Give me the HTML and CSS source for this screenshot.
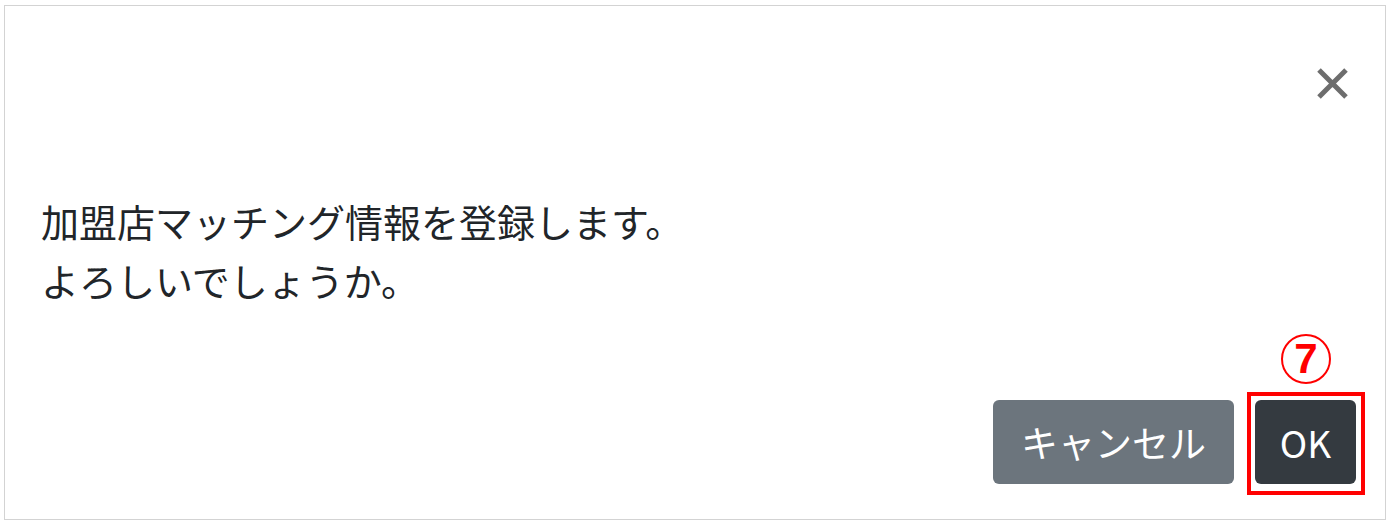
FILE: index.html
```html
<html>
    <head>
        <meta charset="utf-8">
        <link rel="stylesheet" href="styles.css">
    </head>

    <body>
        <div class="modal">
            <div class="modal-header">
                <a class="btn-close" title="閉じる">
                    <svg width="31" height="31" viewBox="0 0 31 31">
                        <path d="M2 2 L29 29 M29 2 L2 29" stroke="#6d6d6d" stroke-width="5" fill="none"/>
                    </svg>
                </a>
            </div>
            <div class="modal-body">
                <p>加盟店マッチング情報を登録します。<br/>よろしいでしょうか。</p>
            </div>
            <div class="modal-footer">
                <a class="btn btn-secondary">キャンセル</a>
                <span class="marker">
                    <span class="marker-num">7</span>
                    <a class="btn btn-dark">OK</a>
                </span>
            </div>
        </div>
    </body>
</html>
```

FILE: styles.css
```css
body {
    margin: 0;
    font-family: "Noto Sans CJK JP", "Noto Sans", sans-serif;
    color: #212529;
    background-color: #fff;
}

.modal {
    box-sizing: border-box;
    height: 515px;
    margin: 5px 6px 0 4px;
    border: 1px solid #d3d3d3;
    display: flex;
    flex-direction: column;
}

.modal-header {
    display: flex;
    justify-content: flex-end;
    padding: 62px 37px 0 0;
}

.btn-close {
    display: block;
    width: 31px;
    height: 31px;
    cursor: pointer;
}

.btn-close svg {
    display: block;
}

.modal-body {
    padding: 92px 0 0 36px;
}

.modal-body p {
    margin: 0;
    font-size: 38px;
    line-height: 59px;
}

.modal-footer {
    margin-top: auto;
    display: flex;
    justify-content: flex-end;
    align-items: flex-start;
    gap: 13px;
    padding: 0 20px 24px 0;
}

.btn {
    display: flex;
    align-items: center;
    justify-content: center;
    height: 84px;
    box-sizing: border-box;
    border-radius: 6px;
    font-size: 37px;
    color: #fff;
    cursor: pointer;
    white-space: nowrap;
}

.btn-secondary {
    margin-top: 8px;
    width: 241px;
    background-color: #6c757d;
}

.btn-dark {
    width: 101px;
    background-color: #343a40;
}

.marker {
    position: relative;
    display: block;
    border: 4px solid #ff0000;
    padding: 4px 5px 7px 4px;
}

.marker-num {
    position: absolute;
    bottom: calc(100% + 12px);
    left: 50%;
    transform: translateX(-50%);
    box-sizing: border-box;
    width: 50px;
    height: 50px;
    border: 2px solid #ff0000;
    border-radius: 50%;
    display: flex;
    align-items: center;
    justify-content: center;
    font-family: "Liberation Sans", Arial, sans-serif;
    font-weight: bold;
    font-size: 42px;
    color: #ff0000;
}
```
